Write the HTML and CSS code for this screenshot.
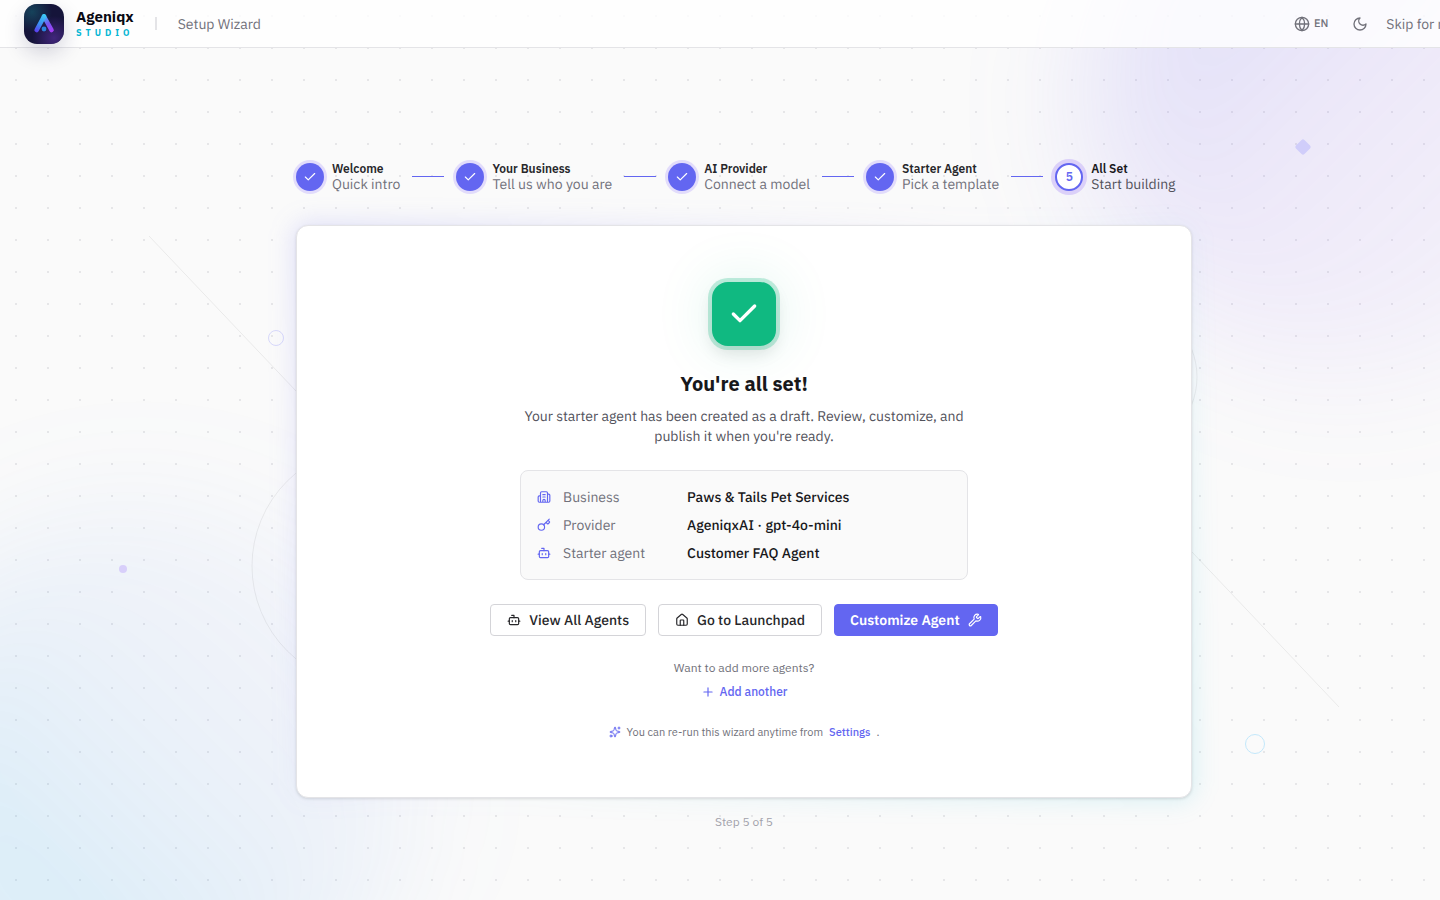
FILE: index.html
```html
<!DOCTYPE html>
<html lang="en">
<head>
<meta charset="utf-8">
<meta name="viewport" content="width=device-width, initial-scale=1">
<title>Ageniqx Studio – Setup Wizard</title>
<link rel="stylesheet" href="styles.css">
</head>
<body>
<svg class="sprite" aria-hidden="true">
  <symbol id="check" viewBox="0 0 24 24"><path d="M20 6 9 17l-5-5"/></symbol>
  <symbol id="bot" viewBox="0 0 24 24"><path d="M12 8V4H8"/><rect width="16" height="12" x="4" y="8" rx="2"/><path d="M2 14h2M20 14h2M15 13v2M9 13v2"/></symbol>
  <symbol id="building" viewBox="0 0 24 24"><path d="M10 12h4M10 8h4M14 21v-3a2 2 0 0 0-4 0v3M6 10H4a2 2 0 0 0-2 2v7a2 2 0 0 0 2 2h16a2 2 0 0 0 2-2V9a2 2 0 0 0-2-2h-2M6 21V5a2 2 0 0 1 2-2h8a2 2 0 0 1 2 2v16"/></symbol>
  <symbol id="key" viewBox="0 0 24 24"><path d="m15.5 7.5 2.3 2.3a1 1 0 0 0 1.4 0l2.1-2.1a1 1 0 0 0 0-1.4L19 4M21 2l-9.6 9.6"/><circle cx="7.5" cy="15.5" r="5.5"/></symbol>
  <symbol id="house" viewBox="0 0 24 24"><path d="M15 21v-8a1 1 0 0 0-1-1h-4a1 1 0 0 0-1 1v8"/><path d="M3 10a2 2 0 0 1 .709-1.528l7-5.999a2 2 0 0 1 2.582 0l7 5.999A2 2 0 0 1 21 10v9a2 2 0 0 1-2 2H5a2 2 0 0 1-2-2z"/></symbol>
  <symbol id="wrench" viewBox="0 0 24 24"><path d="M14.7 6.3a1 1 0 0 0 0 1.4l1.6 1.6a1 1 0 0 0 1.4 0l3.106-3.105c.32-.322.863-.22.983.218a6 6 0 0 1-8.259 7.057l-7.91 7.91a1 1 0 0 1-2.999-3l7.91-7.91a6 6 0 0 1 7.057-8.259c.438.12.54.662.219.984z"/></symbol>
  <symbol id="plus" viewBox="0 0 24 24"><path d="M5 12h14M12 5v14"/></symbol>
  <symbol id="sparkles" viewBox="0 0 24 24"><path d="M11.017 2.814a1 1 0 0 1 1.966 0l1.051 5.558a2 2 0 0 0 1.594 1.594l5.558 1.051a1 1 0 0 1 0 1.966l-5.558 1.051a2 2 0 0 0-1.594 1.594l-1.051 5.558a1 1 0 0 1-1.966 0l-1.051-5.558a2 2 0 0 0-1.594-1.594l-5.558-1.051a1 1 0 0 1 0-1.966l5.558-1.051a2 2 0 0 0 1.594-1.594zM20 2v4M22 4h-4"/><circle cx="4" cy="20" r="2"/></symbol>
  <symbol id="globe" viewBox="0 0 24 24"><circle cx="12" cy="12" r="10"/><path d="M12 2a14.5 14.5 0 0 0 0 20 14.5 14.5 0 0 0 0-20M2 12h20"/></symbol>
  <symbol id="moon" viewBox="0 0 24 24"><path d="M12 3a6 6 0 0 0 9 9 9 9 0 1 1-9-9Z"/></symbol>
</svg>

<div class="page">
  <div class="blob blob-violet"></div>
  <div class="blob blob-sky"></div>
  <svg class="decor" width="1488" height="900" viewBox="0 0 1488 900" aria-hidden="true">
    <g fill="none" stroke="#18181b" stroke-opacity=".07">
      <path d="M149 236 296 391 M1192 552 1339 707"/>
      <circle cx="372" cy="566" r="120"/>
      <circle cx="1122" cy="377" r="75"/>
    </g>
    <circle cx="276" cy="338" r="7.5" fill="none" stroke="#d8d9fb"/>
    <circle cx="1255" cy="744" r="9.5" fill="none" stroke="#c3e8fa"/>
    <circle cx="123" cy="569" r="4" fill="#d8cffa"/>
    <rect x="1297" y="141" width="12" height="12" rx="2" fill="#d0cdfa" transform="rotate(45 1303 147)"/>
  </svg>

  <header class="topbar">
    <svg class="logo" viewBox="0 0 40 40" aria-hidden="true">
      <defs>
        <radialGradient id="teal" cx=".2" cy=".2" r=".5"><stop offset="0" stop-color="#164e63" stop-opacity=".8"/><stop offset="1" stop-color="#164e63" stop-opacity="0"/></radialGradient>
        <radialGradient id="plum" cx=".75" cy=".85" r=".55"><stop offset="0" stop-color="#4c2a8c" stop-opacity=".8"/><stop offset="1" stop-color="#4c2a8c" stop-opacity="0"/></radialGradient>
        <linearGradient id="left" x1="20" y1="11" x2="13" y2="28" gradientUnits="userSpaceOnUse"><stop offset="0" stop-color="#3cc8f5"/><stop offset=".55" stop-color="#3b8df3"/><stop offset="1" stop-color="#5b3ef0"/></linearGradient>
        <linearGradient id="right" x1="20" y1="11" x2="28" y2="28" gradientUnits="userSpaceOnUse"><stop offset="0" stop-color="#3cc8f5"/><stop offset=".5" stop-color="#7457f3"/><stop offset="1" stop-color="#a83cf5"/></linearGradient>
      </defs>
      <rect width="40" height="40" fill="#15143a"/>
      <rect width="40" height="40" fill="url(#teal)"/>
      <rect width="40" height="40" fill="url(#plum)"/>
      <path d="M20 12.5 27.5 26" stroke="url(#right)" stroke-width="4.6" stroke-linecap="round"/>
      <path d="M20 12.5 12.7 26" stroke="url(#left)" stroke-width="4.6" stroke-linecap="round"/>
      <circle cx="20" cy="25" r="2.4" fill="#2a86e0"/>
    </svg>
    <div class="brand"><span class="brand-name">Ageniqx</span><span class="brand-sub">STUDIO</span></div>
    <span class="divider"></span>
    <span class="page-name">Setup Wizard</span>
    <nav class="actions">
      <button class="lang" type="button"><svg class="icon i16"><use href="#globe"/></svg>EN</button>
      <button class="theme" type="button" aria-label="Dark mode"><svg class="icon i16"><use href="#moon"/></svg></button>
      <button class="skip" type="button">Skip for now</button>
    </nav>
  </header>

  <main class="wizard">
    <ol class="steps">
      <li class="step"><span class="dot"><svg class="icon i14"><use href="#check"/></svg></span><span class="step-text"><b>Welcome</b><span>Quick intro</span></span></li>
      <li class="step"><span class="dot"><svg class="icon i14"><use href="#check"/></svg></span><span class="step-text"><b>Your Business</b><span>Tell us who you are</span></span></li>
      <li class="step"><span class="dot"><svg class="icon i14"><use href="#check"/></svg></span><span class="step-text"><b>AI Provider</b><span>Connect a model</span></span></li>
      <li class="step"><span class="dot"><svg class="icon i14"><use href="#check"/></svg></span><span class="step-text"><b>Starter Agent</b><span>Pick a template</span></span></li>
      <li class="step current" aria-current="step"><span class="dot">5</span><span class="step-text"><b>All Set</b><span>Start building</span></span></li>
    </ol>

    <section class="card">
      <div class="badge"><svg class="icon i32"><use href="#check"/></svg></div>
      <h1>You're all set!</h1>
      <p class="lead">Your starter agent has been created as a draft. Review, customize, and publish it when you're ready.</p>
      <dl class="summary">
        <div class="row"><svg class="icon i14"><use href="#building"/></svg><dt>Business</dt><dd>Paws &amp; Tails Pet Services</dd></div>
        <div class="row"><svg class="icon i14"><use href="#key"/></svg><dt>Provider</dt><dd>AgeniqxAI · gpt-4o-mini</dd></div>
        <div class="row"><svg class="icon i14"><use href="#bot"/></svg><dt>Starter agent</dt><dd>Customer FAQ Agent</dd></div>
      </dl>
      <div class="buttons">
        <button class="btn" type="button"><svg class="icon i14"><use href="#bot"/></svg>View All Agents</button>
        <button class="btn" type="button"><svg class="icon i14"><use href="#house"/></svg>Go to Launchpad</button>
        <button class="btn primary" type="button">Customize Agent<svg class="icon i14"><use href="#wrench"/></svg></button>
      </div>
      <p class="more">Want to add more agents?</p>
      <button class="add" type="button"><svg class="icon i14"><use href="#plus"/></svg>Add another</button>
      <p class="hint"><svg class="icon i12"><use href="#sparkles"/></svg><span>You can re-run this wizard anytime from</span><a href="#settings">Settings</a><span>.</span></p>
    </section>
    <p class="count">Step 5 of 5</p>
  </main>
</div>
</body>
</html>
```
FILE: styles.css
```css
* { box-sizing: border-box; }
body {
  margin: 0;
  background: #fafafa;
  color: #18181b;
  font-family: "IBM Plex Sans", Roboto, "Noto Sans", sans-serif;
  font-size: 14px;
  line-height: 20px;
  text-rendering: geometricPrecision;
  overflow-x: hidden;
}
h1, p, ol, dl, dd { margin: 0; padding: 0; }
button { font: inherit; color: inherit; text-rendering: inherit; background: none; border: 0; padding: 0; cursor: pointer; }
a { color: #6366f1; text-decoration: none; }

.sprite { display: none; }
.icon { flex: none; fill: none; stroke: currentColor; stroke-width: 2; stroke-linecap: round; stroke-linejoin: round; }
.i12 { width: 12px; height: 12px; }
.i14 { width: 14px; height: 14px; }
.i16 { width: 16px; height: 16px; }
.i32 { width: 32px; height: 32px; }

.page {
  position: relative;
  width: calc(100% + 48px);
  min-height: 100vh;
  overflow: hidden;
  background: radial-gradient(circle, #e6e6e8 1px, transparent 1px) 0 0 / 32px 32px;
}
.decor { position: absolute; top: 0; left: 0; }
.blob { position: absolute; width: 540px; height: 540px; border-radius: 50%; filter: blur(60px); }
.blob-violet {
  top: -160px;
  right: -140px;
  background: linear-gradient(135deg, rgba(99, 102, 241, .22), rgba(139, 92, 246, .1) 50%, rgba(139, 92, 246, .03));
}
.blob-sky {
  bottom: -140px;
  left: -120px;
  background: linear-gradient(45deg, rgba(14, 170, 240, .2), rgba(70, 140, 240, .08) 55%, rgba(99, 102, 241, .03));
}

.topbar {
  position: relative;
  display: flex;
  align-items: center;
  height: 48px;
  padding: 0 24px;
  background: rgba(255, 255, 255, .8);
  border-bottom: 1px solid #e4e4e7;
}
.logo { width: 40px; height: 40px; border-radius: 13px; box-shadow: 0 8px 20px rgba(30, 27, 75, .18); }
.brand { display: flex; flex-direction: column; gap: 2px; margin-left: 12px; text-rendering: auto; }
.brand-name { font-size: 15px; line-height: 16px; font-weight: 700; color: #0a0a14; }
.brand-sub { font-size: 9px; line-height: 12px; font-weight: 700; letter-spacing: 4px; color: #06b6d4; }
.divider { width: 2px; height: 13px; margin: 0 21px; background: #e4e4e7; }
.page-name { color: #71717a; }
.actions { display: flex; align-items: center; margin-left: auto; color: #71717a; }
.lang { display: flex; align-items: center; gap: 4px; font-size: 11px; font-weight: 500; }
.theme { display: flex; margin: 0 18px 0 24px; }

.wizard {
  position: relative;
  z-index: 0;
  width: 100%;
  max-width: 896px;
  margin: 0 auto;
  padding: 114px 0 64px;
}
.steps { display: flex; list-style: none; }
.step { display: flex; align-items: center; gap: 8px; }
.step:not(:last-child)::after { content: ""; width: 32px; height: 1px; margin: 0 12px 1px 4px; background: #6366f1; }
.dot {
  display: flex;
  align-items: center;
  justify-content: center;
  width: 28px;
  height: 28px;
  border-radius: 50%;
  background: #6366f1;
  color: #fff;
  text-rendering: auto;
  box-shadow: 0 0 0 3px #e2dcfb;
}
.step-text { display: flex; flex-direction: column; color: #71717a; }
.step-text > b { font-size: 12px; line-height: 14px; font-weight: 600; text-rendering: auto; color: #27272a; }
.step-text > span { line-height: 16px; }
.current .dot { border: 2px solid #6366f1; background: #fff; color: #6366f1; font-size: 12px; font-weight: 600; box-shadow: 0 0 0 4px #dbd0f9; }
.current .step-text { color: #52525b; }
.current .step-text > b { color: #18181b; }

.card {
  position: relative;
  display: flex;
  flex-direction: column;
  align-items: center;
  margin-top: 33px;
  padding: 56px 24px;
  border: 1px solid #e4e4e7;
  border-radius: 12px;
  background: #fff;
  box-shadow: 0 1px 3px rgba(0, 0, 0, .12);
}
.card::before {
  content: "";
  position: absolute;
  z-index: -1;
  inset: -4px;
  border-radius: 16px;
  background: linear-gradient(135deg, rgba(99, 102, 241, .18), rgba(139, 92, 246, .02) 45%, rgba(6, 182, 212, .02) 55%, rgba(6, 182, 212, .14));
  filter: blur(12px);
}
.badge {
  display: flex;
  align-items: center;
  justify-content: center;
  width: 64px;
  height: 64px;
  border-radius: 16px;
  background: #10b981;
  color: #fff;
  box-shadow: 0 0 0 4px rgba(16, 185, 129, .25), 0 8px 16px rgba(0, 0, 0, .1), 0 0 60px rgba(16, 185, 129, .14);
}
.badge .icon { stroke-width: 2.5; }
h1 { margin-top: 24px; font-size: 20px; line-height: 28px; font-weight: 700; text-rendering: auto; }
.lead { max-width: 448px; margin-top: 8px; text-align: center; color: #52525b; }
.summary {
  display: grid;
  gap: 8px;
  width: 100%;
  max-width: 448px;
  margin-top: 24px;
  padding: 16px;
  border: 1px solid #e4e4e7;
  border-radius: 8px;
  background: #fafafa;
}
.row { display: grid; grid-template-columns: 14px 112px 1fr; gap: 12px; align-items: center; }
.row .icon { color: #6366f1; }
dt { color: #71717a; }
dd { font-weight: 500; }
.buttons { display: flex; gap: 12px; margin-top: 24px; }
.btn {
  display: flex;
  align-items: center;
  justify-content: center;
  gap: 8px;
  height: 32px;
  padding: 0 16px;
  border: 1px solid #d4d4d8;
  border-radius: 4px;
  background: #fff;
  color: #27272a;
  font-weight: 500;
}
.primary { padding: 0 15px; border-color: #6366f1; background: #6366f1; color: #fff; font-weight: 600; }
.more, .add, .hint, .count { text-rendering: auto; }
.more { margin-top: 24px; font-size: 12px; line-height: 16px; color: #71717a; }
.add { display: flex; align-items: center; gap: 5px; margin-top: 8px; font-size: 12px; line-height: 16px; font-weight: 500; color: #6366f1; }
.hint { display: flex; align-items: center; gap: 6px; margin: 24px 0 1px; font-size: 11px; line-height: 16px; color: #71717a; }
.hint .icon { color: #6366f1; }
.hint a { font-weight: 500; }
.count { margin-top: 16px; text-align: center; font-size: 12px; line-height: 16px; color: #a1a1aa; }
```
